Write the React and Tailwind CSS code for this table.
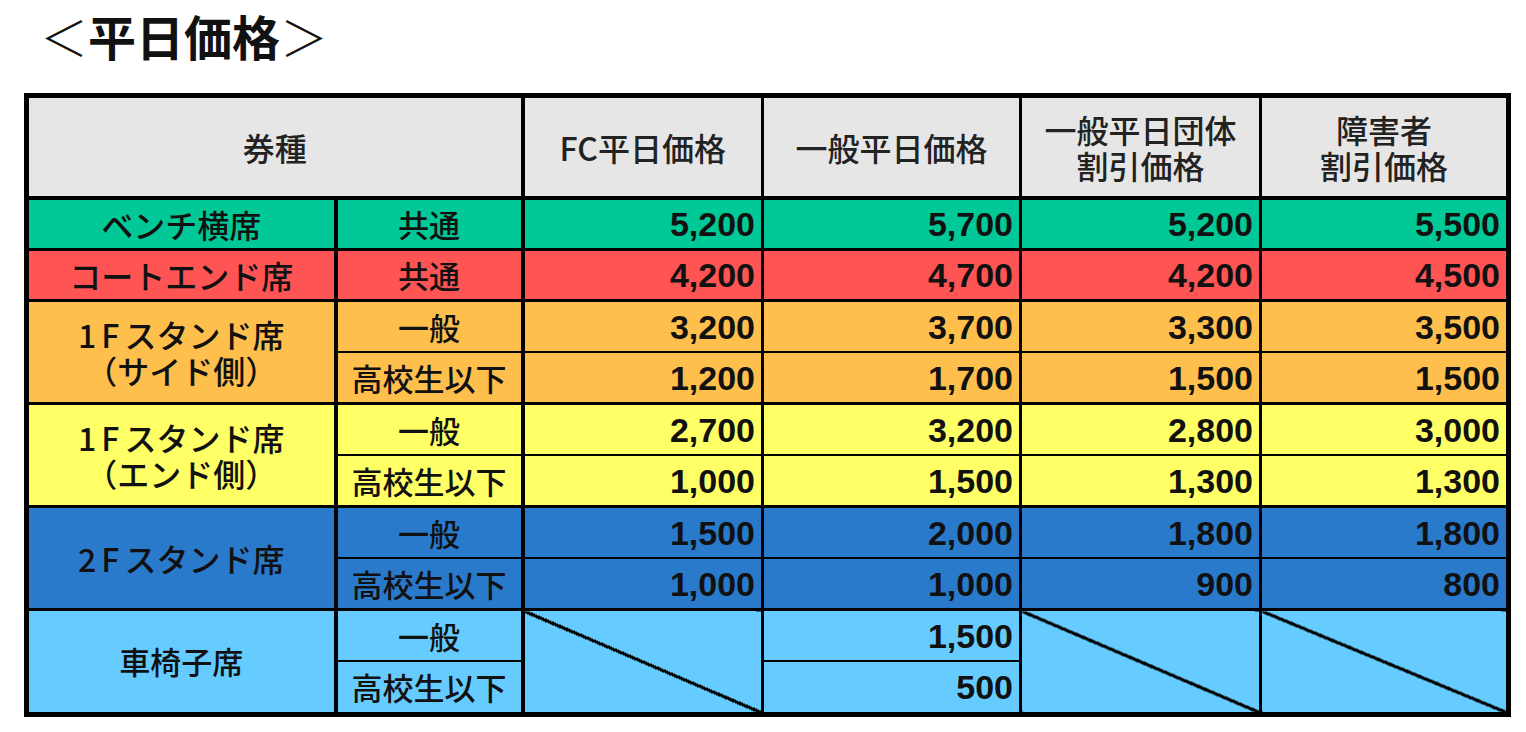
import React from "react";

const jp = "font-['Noto_Sans_CJK_JP',sans-serif] font-medium";
const num = "font-['Liberation_Sans',Arial,sans-serif] font-bold text-[34px] leading-[40px] text-right pr-[6px]";
const diag =
  "bg-[linear-gradient(to_top_right,transparent_calc(50%_-_1.6px),#000_calc(50%_-_1.6px),#000_calc(50%_+_1.6px),transparent_calc(50%_+_1.6px))]";

const F1 = <span className="tracking-[5px]">1F</span>;
const F2 = <span className="tracking-[5px]">2F</span>;

const groups = [
  { name: ["ベンチ横席"], bg: "bg-[#00c896]", rows: [{ type: "共通", v: ["5,200", "5,700", "5,200", "5,500"] }] },
  { name: ["コートエンド席"], bg: "bg-[#ff5454]", rows: [{ type: "共通", v: ["4,200", "4,700", "4,200", "4,500"] }] },
  {
    name: [<>{F1}スタンド席</>, "（サイド側）"],
    bg: "bg-[#ffbf4d]",
    rows: [
      { type: "一般", v: ["3,200", "3,700", "3,300", "3,500"] },
      { type: "高校生以下", v: ["1,200", "1,700", "1,500", "1,500"] },
    ],
  },
  {
    name: [<>{F1}スタンド席</>, "（エンド側）"],
    bg: "bg-[#ffff66]",
    rows: [
      { type: "一般", v: ["2,700", "3,200", "2,800", "3,000"] },
      { type: "高校生以下", v: ["1,000", "1,500", "1,300", "1,300"] },
    ],
  },
  {
    name: [<>{F2}スタンド席</>],
    bg: "bg-[#2a7acb]",
    rows: [
      { type: "一般", v: ["1,500", "2,000", "1,800", "1,800"] },
      { type: "高校生以下", v: ["1,000", "1,000", "900", "800"] },
    ],
  },
];

function Group({ g, first }) {
  const top = first ? "border-t-[4px]" : "border-t-[3px]";
  return (
    <>
      {g.rows.map((r, i) => (
        <tr key={i} className={`h-[51.5px] ${g.bg}`}>
          {i === 0 && (
            <td
              rowSpan={g.rows.length}
              className={`${top} border-r-[4px] border-black text-center align-middle ${jp} text-[32px] leading-[36px] p-0`}
            >
              {g.name.map((n, k) => (
                <div key={k}>{n}</div>
              ))}
            </td>
          )}
          <td
            className={`${i === 0 ? top : "border-t-2"} border-r-[4px] border-black text-center p-0 ${jp} text-[31px] leading-[38px]`}
          >
            {r.type}
          </td>
          {r.v.map((v, k) => (
            <td key={k} className={`${i === 0 ? top : "border-t-2"} border-x-[3px] border-black p-0 ${num}`}>
              {v}
            </td>
          ))}
        </tr>
      ))}
    </>
  );
}

export default function App() {
  return (
    <div className="bg-white w-[1526px] h-[732px] text-[#111]">
      <div className={`h-[93px] pl-[40px] pt-[3px] text-[48px] leading-[64px] font-['Noto_Sans_CJK_JP',sans-serif]`}>
        <span className="font-light">＜</span>
        <span className="font-bold">平日価格</span>
        <span className="font-light">＞</span>
      </div>
      <table className="ml-[24px] border-collapse table-fixed border-[5px] border-black w-[1482px]">
        <colgroup>
          <col className="w-[309px]" />
          <col className="w-[187px]" />
          <col className="w-[240px]" />
          <col className="w-[258px]" />
          <col className="w-[240px]" />
          <col className="w-[248px]" />
        </colgroup>
        <thead>
          <tr className={`h-[102px] bg-[#e6e6e6] ${jp} text-[32px] leading-[36px] text-[#222]`}>
            <th colSpan={2} className="font-medium border-r-[4px] border-black p-0">券種</th>
            <th className="font-medium border-x-[3px] border-black p-0">FC平日価格</th>
            <th className="font-medium border-x-[3px] border-black p-0">一般平日価格</th>
            <th className="font-medium border-x-[3px] border-black p-0">
              <div>一般平日団体</div>
              <div>割引価格</div>
            </th>
            <th className="font-medium border-x-[3px] border-black p-0">
              <div>障害者</div>
              <div>割引価格</div>
            </th>
          </tr>
        </thead>
        <tbody>
          {groups.map((g, i) => (
            <Group key={i} g={g} first={i === 0} />
          ))}
          <tr className="h-[51.5px] bg-[#66ccff]">
            <td rowSpan={2} className={`border-t-[3px] border-r-[4px] border-black text-center p-0 ${jp} text-[31px]`}>
              車椅子席
            </td>
            <td className={`border-t-[3px] border-r-[4px] border-black text-center p-0 ${jp} text-[31px] leading-[38px]`}>
              一般
            </td>
            <td rowSpan={2} className={`border-t-[3px] border-x-[3px] border-black p-0 ${diag}`} />
            <td className={`border-t-[3px] border-x-[3px] border-black p-0 ${num}`}>1,500</td>
            <td rowSpan={2} className={`border-t-[3px] border-x-[3px] border-black p-0 ${diag}`} />
            <td rowSpan={2} className={`border-t-[3px] border-x-[3px] border-black p-0 ${diag}`} />
          </tr>
          <tr className="h-[53px] bg-[#66ccff]">
            <td className={`border-t-2 border-r-[4px] border-black text-center p-0 ${jp} text-[31px] leading-[38px]`}>
              高校生以下
            </td>
            <td className={`border-t-2 border-x-[3px] border-black p-0 ${num}`}>500</td>
          </tr>
        </tbody>
      </table>
    </div>
  );
}
